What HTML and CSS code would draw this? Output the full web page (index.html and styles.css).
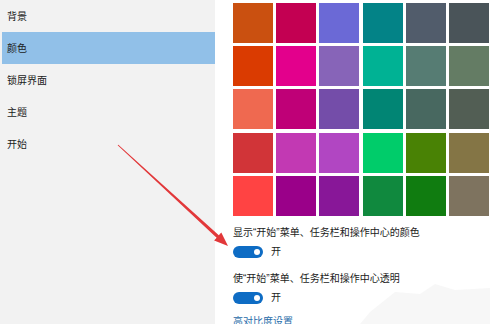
FILE: index.html
```html
<!DOCTYPE html>
<html lang="zh-CN">
<head>
<meta charset="utf-8">
<link rel="stylesheet" href="styles.css">
</head>
<body>
<div class="page">
  <nav class="sidebar">
    <div class="nav-item">背景</div>
    <div class="nav-item active">颜色</div>
    <div class="nav-item">锁屏界面</div>
    <div class="nav-item">主题</div>
    <div class="nav-item">开始</div>
  </nav>
  <main class="content">
    <div class="swatches">
      <span class="sw" style="background:#CA5010"></span>
      <span class="sw" style="background:#C30052"></span>
      <span class="sw" style="background:#6B69D6"></span>
      <span class="sw" style="background:#038387"></span>
      <span class="sw" style="background:#515C6B"></span>
      <span class="sw" style="background:#4A5459"></span>
      <span class="sw" style="background:#DA3B01"></span>
      <span class="sw" style="background:#E3008C"></span>
      <span class="sw" style="background:#8764B8"></span>
      <span class="sw" style="background:#00B294"></span>
      <span class="sw" style="background:#567C73"></span>
      <span class="sw" style="background:#647C64"></span>
      <span class="sw" style="background:#EF6950"></span>
      <span class="sw" style="background:#BF0077"></span>
      <span class="sw" style="background:#744DA9"></span>
      <span class="sw" style="background:#018574"></span>
      <span class="sw" style="background:#486860"></span>
      <span class="sw" style="background:#525E54"></span>
      <span class="sw" style="background:#D13438"></span>
      <span class="sw" style="background:#C239B3"></span>
      <span class="sw" style="background:#B146C2"></span>
      <span class="sw" style="background:#00CC6A"></span>
      <span class="sw" style="background:#498205"></span>
      <span class="sw" style="background:#847545"></span>
      <span class="sw" style="background:#FF4343"></span>
      <span class="sw" style="background:#9A0089"></span>
      <span class="sw" style="background:#881798"></span>
      <span class="sw" style="background:#10893E"></span>
      <span class="sw" style="background:#107C10"></span>
      <span class="sw" style="background:#7E735F"></span>
    </div>
    <div class="setting">
      <div class="label">显示“开始”菜单、任务栏和操作中心的颜色</div>
      <div class="toggle-row"><span class="toggle"><span class="knob"></span></span><span class="state">开</span></div>
    </div>
    <div class="setting">
      <div class="label">使“开始”菜单、任务栏和操作中心透明</div>
      <div class="toggle-row"><span class="toggle"><span class="knob"></span></span><span class="state">开</span></div>
    </div>
    <a class="link">高对比度设置</a>
  </main>
</div>
<svg class="overlay" width="490" height="324" viewBox="0 0 490 324">
  <path d="M370 312 L395 292 L420 294 L435 284 L455 290 L490 288 L490 324 L360 324 Z" fill="#f4f4f4" opacity="0.7"/>
  <polygon points="117.66,145.37 216.6,237.7 214.1,240.4 228,246 221.3,232.6 218.8,235.3 118.34,144.63" fill="#e2383a"/>
</svg>
</body>
</html>
```
FILE: styles.css
```css
html, body {
  margin: 0;
  padding: 0;
  background: #ffffff;
}
body {
  font-family: "Liberation Sans", "Noto Sans CJK SC", sans-serif;
  color: #1b1b1b;
  width: 490px;
  height: 324px;
  overflow: hidden;
  position: relative;
}
.page {
  display: flex;
  height: 324px;
}
.sidebar {
  width: 215px;
  flex: none;
  background: #f2f2f2;
  padding-left: 2px;
  box-sizing: border-box;
}
.nav-item {
  height: 32px;
  line-height: 33px;
  font-size: 10px;
  padding-left: 5px;
}
.nav-item.active {
  background: #91c0e8;
}
.content {
  padding-left: 18px;
  padding-top: 3px;
  flex: 1;
}
.swatches {
  display: grid;
  grid-template-columns: repeat(6, 40px);
  grid-auto-rows: 40px;
  gap: 3.2px;
}
.sw {
  display: block;
}
.setting {
  display: flex;
  flex-direction: column;
}
.swatches + .setting {
  margin-top: 9px;
}
.label {
  font-size: 10px;
  line-height: 15px;
  height: 15px;
}
.toggle-row {
  display: flex;
  align-items: center;
  gap: 8px;
  margin-top: 5px;
  height: 14px;
}
.setting + .setting {
  margin-top: 12px;
}
.toggle {
  width: 30px;
  height: 12px;
  border-radius: 6px;
  background: #0e6cc4;
  display: flex;
  justify-content: flex-end;
  align-items: center;
  box-sizing: border-box;
  padding-right: 3px;
}
.knob {
  width: 6px;
  height: 6px;
  border-radius: 50%;
  background: #ffffff;
}
.state {
  font-size: 10px;
  line-height: 14px;
}
.link {
  display: block;
  margin-top: 10px;
  font-size: 10px;
  line-height: 14px;
  color: #1e6aa8;
}
.overlay {
  position: absolute;
  left: 0;
  top: 0;
  pointer-events: none;
}
```
